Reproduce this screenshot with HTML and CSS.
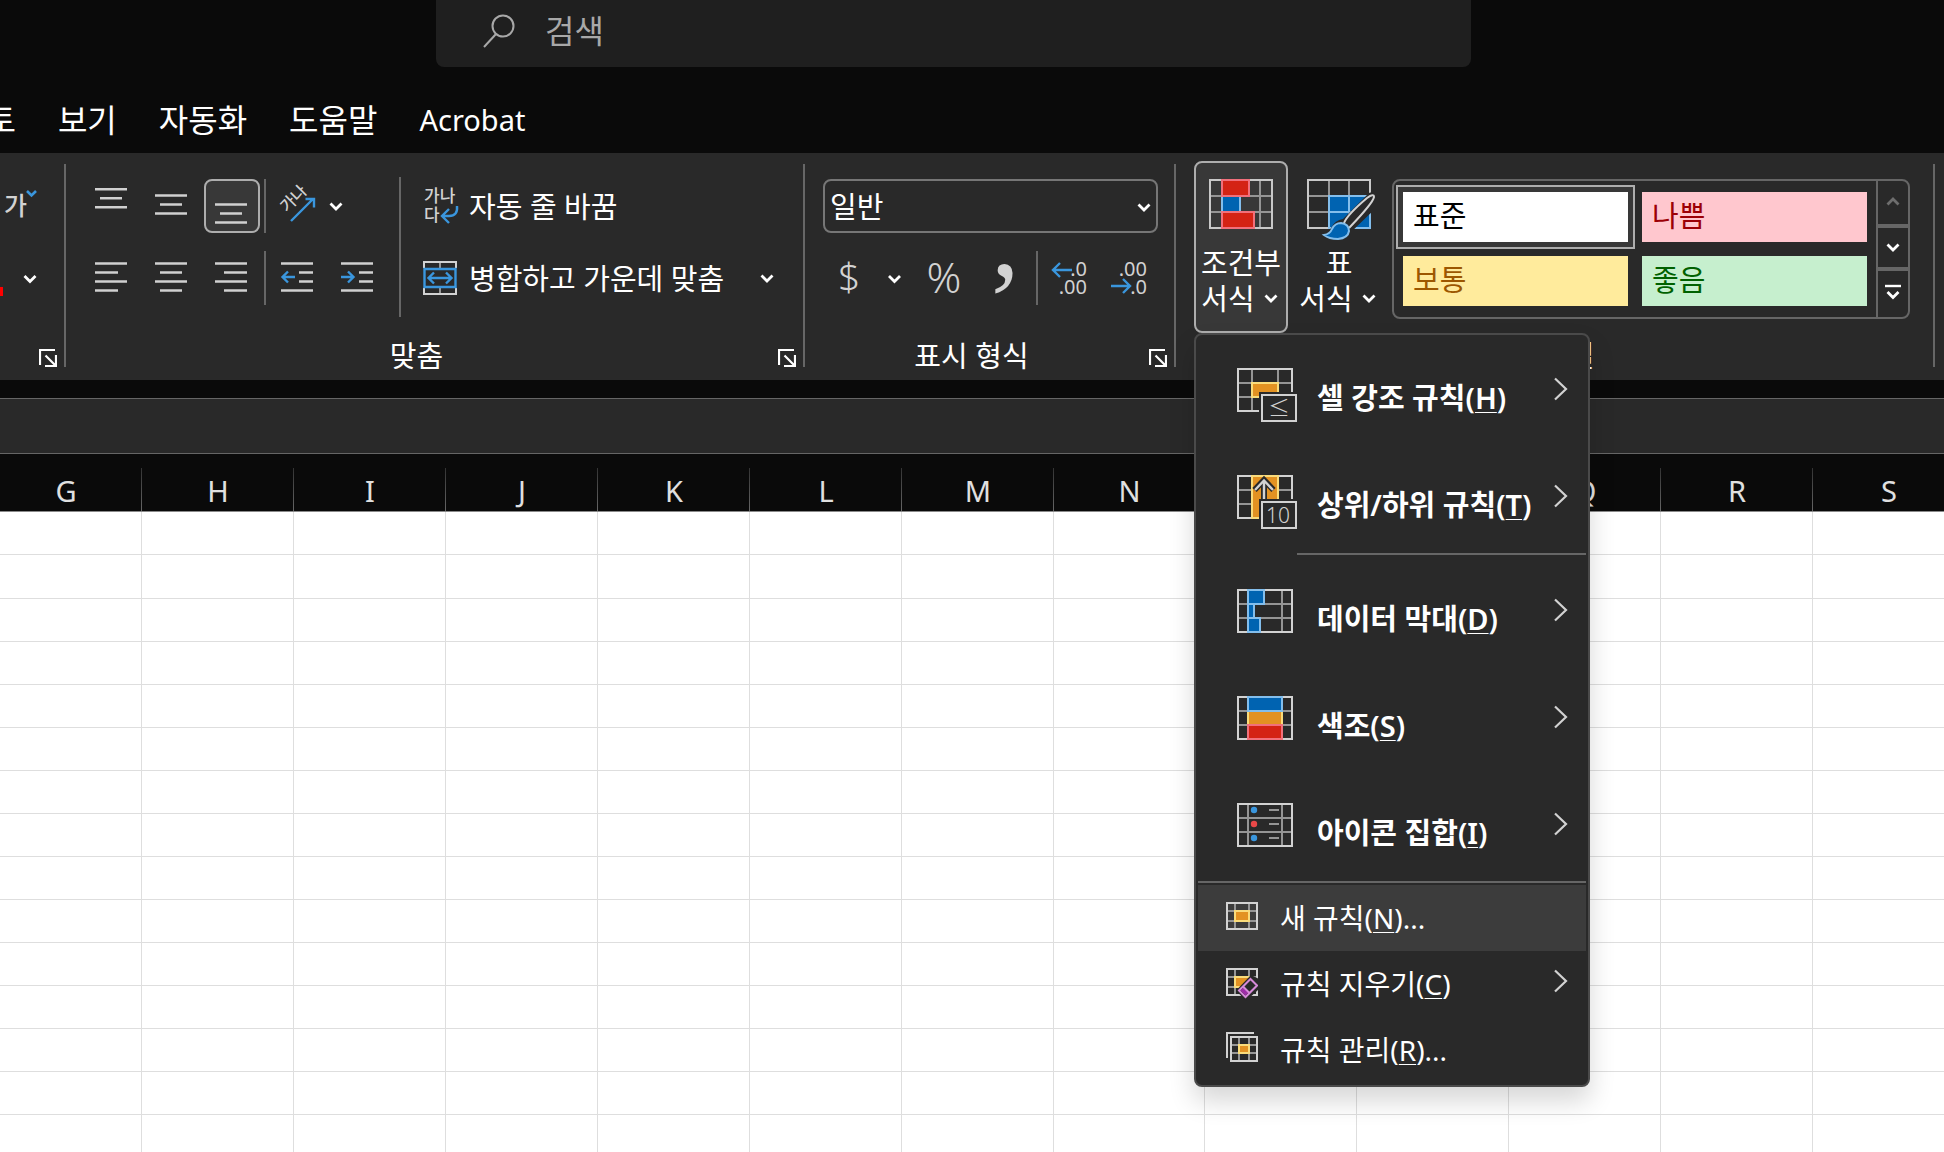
FILE: index.html
```html
<!DOCTYPE html>
<html lang="ko">
<head>
<meta charset="utf-8">
<title>Excel</title>
<link rel="stylesheet" href="styles.css">
</head>
<body>
<svg class="defs" aria-hidden="true">
  <symbol id="chev" viewBox="0 0 14 9"><path d="M1.500 1.500L7 7l5.500-5.500" fill="none" stroke="currentColor" stroke-width="2.800"/></symbol>
  <symbol id="arrow" viewBox="0 0 14 24"><path d="M1 1.500L12 12 1 22.500" fill="none" stroke="#d2d2d2" stroke-width="2.200"/></symbol>
  <symbol id="launch" viewBox="0 0 18 18"><path d="M1 16V1h15M17 6v11H6M6.500 6.500L16 16" fill="none" stroke="#fff" stroke-width="2.200"/></symbol>
</svg>

<header class="top">
  <div class="search">
    <svg width="32" height="34" viewBox="0 0 32 34" fill="none" stroke="#a8a8a8" stroke-width="2"><circle cx="20" cy="12" r="10.500"/><path d="M13 20L1 33"/></svg>
    <input type="text" placeholder="검색" aria-label="검색">
  </div>
  <nav class="tabs">
    <button>검토</button><button>보기</button><button>자동화</button><button>도움말</button><button class="latin">Acrobat</button>
  </nav>
</header>

<main class="sheet">
<section class="ribbon">
  <div class="group font-group">
    <div class="body col">
      <button class="tool cut" aria-label="윗주"><svg width="42" height="54" viewBox="0 0 42 54"><text x="4" y="36" font-size="25" font-weight="500" fill="#d2d2d2">가</text><path d="M27 12l4.500 4.500L36 12" fill="none" stroke="#3a96dd" stroke-width="2.600"/></svg></button>
      <button class="tool cut" aria-label="글꼴 색"><svg width="42" height="54" viewBox="0 0 42 54"><path d="M0 36h3v9H0z" fill="#f00"/><path d="M24.500 25L30 30.500l5.500-5.500" fill="none" stroke="#fff" stroke-width="2.800"/></svg></button>
    </div>
    <footer><span></span><button class="launcher" aria-label="글꼴 설정"><svg width="18" height="18"><use href="#launch"/></svg></button></footer>
  </div>
  <div class="rule"></div>

  <div class="group align-group">
    <div class="body">
      <div class="col">
        <div class="row lines">
          <button class="tool" aria-label="위쪽 맞춤"><svg width="52" height="50" viewBox="2 2 52 50"><path d="M11 10.200h32M16 19.200h22M11 28.200h32"/></svg></button>
          <button class="tool" aria-label="가운데 맞춤"><svg width="52" height="50" viewBox="2 2 52 50"><path d="M11 16.500h32M16 25.500h22M11 34.500h32"/></svg></button>
          <button class="tool on" aria-label="아래쪽 맞춤"><svg width="52" height="50" viewBox="2 2 52 50"><path d="M11 25.500h32M16 34.500h22M11 43.500h32"/></svg></button>
          <div class="bar"></div>
          <button class="tool wide" aria-label="방향"><svg width="76" height="50" viewBox="2 2 76 50"><text x="17" y="34" font-size="16" font-weight="500" fill="#d2d2d2" stroke="none" transform="rotate(-45 17 34)">가나</text><path class="blue" d="M21 42l22-22M35.500 20h8.500v8.500"/><path class="white" d="M60.500 24.500l5.500 5.500 5.500-5.500"/></svg></button>
        </div>
        <div class="row lines">
          <button class="tool" aria-label="왼쪽 맞춤"><svg width="52" height="50" viewBox="2 2 52 50"><path d="M11 12.500h32M11 21.500h23M11 30.500h32M11 39.500h23"/></svg></button>
          <button class="tool" aria-label="가운데 맞춤"><svg width="52" height="50" viewBox="2 2 52 50"><path d="M11 12.500h32M16 21.500h22M11 30.500h32M16 39.500h22"/></svg></button>
          <button class="tool" aria-label="오른쪽 맞춤"><svg width="52" height="50" viewBox="2 2 52 50"><path d="M11 12.500h32M20 21.500h23M11 30.500h32M20 39.500h23"/></svg></button>
          <div class="bar"></div>
          <button class="tool" aria-label="내어쓰기"><svg width="52" height="50" viewBox="2 2 52 50"><path d="M11 12.500h32M29 21.500h14M29 30.500h14M11 39.500h32"/><path class="blue" d="M25 26H13M18 20.500L12.500 26l5.500 5.500"/></svg></button>
          <button class="tool" aria-label="들여쓰기"><svg width="52" height="50" viewBox="2 2 52 50"><path d="M11 12.500h32M29 21.500h14M29 30.500h14M11 39.500h32"/><path class="blue" d="M11 26h12M18 20.500l5.500 5.500-5.500 5.500"/></svg></button>
        </div>
      </div>
      <div class="bar tall"></div>
      <div class="col wrapcol">
        <button class="labeled"><svg width="36" height="38" viewBox="0 0 36 38"><text x="1" y="15" font-size="17" font-weight="500" fill="#d2d2d2">가나</text><text x="1" y="34" font-size="17" font-weight="500" fill="#d2d2d2">다</text><path d="M34 19q1 10-8 10h-7M26 22l-7 7 7 7" fill="none" stroke="#3a96dd" stroke-width="2.400"/></svg><span>자동 줄 바꿈</span></button>
        <button class="labeled"><svg width="36" height="34" viewBox="0 0 36 34" fill="none" stroke-width="2"><path d="M1 7V1h32v6M1 27v6h32v-6" stroke="#d2d2d2"/><path d="M17 2v5M17 27v5" stroke="#959595"/><path d="M1.500 8h31v18h-31zM6 17h22M11 11.500L5.500 17l5.500 5.500M23 11.500l5.500 5.500-5.500 5.500" stroke="#3a96dd" stroke-width="2.400"/></svg><span>병합하고 가운데 맞춤</span><svg width="14" height="9"><use href="#chev"/></svg></button>
      </div>
    </div>
    <footer><span>맞춤</span><button class="launcher" aria-label="맞춤 설정"><svg width="18" height="18"><use href="#launch"/></svg></button></footer>
  </div>
  <div class="rule"></div>

  <div class="group number-group">
    <div class="body col">
      <div class="combo">
        <select aria-label="표시 형식"><option>일반</option></select>
        <svg width="14" height="9"><use href="#chev"/></svg>
      </div>
      <div class="row">
        <button class="tool money" aria-label="회계 표시 형식"><svg width="85" height="50" viewBox="2 2 85 50"><text x="15" y="40" class="light" font-size="39">$</text><path d="M66 25l5.500 5.500L77 25" fill="none" stroke="#fff" stroke-width="2.800"/></svg></button>
        <button class="tool" aria-label="백분율"><svg width="52" height="50" viewBox="2 2 52 50"><text x="28" y="42" class="light" font-size="43" text-anchor="middle">%</text></svg></button>
        <button class="tool" aria-label="쉼표 스타일"><svg width="52" height="50" viewBox="2 2 52 50"><text x="15" y="25" class="comma" font-size="115">,</text></svg></button>
        <div class="bar"></div>
        <button class="tool" aria-label="자릿수 늘림"><svg width="52" height="50" viewBox="2 2 52 50"><g class="digits"><text x="45" y="25">.0</text><text x="45" y="43">.00</text></g><path d="M30 19H11M18 12l-7 7 7 7" fill="none" stroke="#3a96dd" stroke-width="2.400"/></svg></button>
        <button class="tool" aria-label="자릿수 줄임"><svg width="52" height="50" viewBox="2 2 52 50"><g class="digits"><text x="45" y="25">.00</text><text x="45" y="43">.0</text></g><path d="M9 35h19M21 28l7 7-7 7" fill="none" stroke="#3a96dd" stroke-width="2.400"/></svg></button>
      </div>
    </div>
    <footer><span>표시 형식</span><button class="launcher" aria-label="표시 형식 설정"><svg width="18" height="18"><use href="#launch"/></svg></button></footer>
  </div>
  <div class="rule"></div>

  <div class="group style-group">
    <div class="body">
      <div class="anchor">
        <button class="big on" aria-haspopup="menu" aria-expanded="true">
          <svg width="68" height="62" viewBox="-2 0 68 62" fill="none" stroke-width="2"><path d="M51 1v48M1 17h62M1 33h62" stroke="#959595"/><path d="M1 1h62v48H1z" stroke="#c8c8c8"/><path d="M13 17h18v16H13z" fill="#0063b1" stroke="#83beec"/><path d="M13 1h27v16H13zM13 33h32v16H13z" fill="#d42314" stroke="#f1707b"/></svg>
          <span>조건부</span><span class="drop">서식<svg width="14" height="9"><use href="#chev"/></svg></span>
        </button>
        <div class="menu" role="menu">
          <button role="menuitem" class="large"><svg width="60" height="54" viewBox="0 0 60 54" fill="none" stroke-width="2"><path d="M15 1v42M41 1v42M1 15h54M1 29h54" stroke="#959595"/><path d="M1 1h54v42H1z" stroke="#d2d2d2"/><path d="M15 15h26v14H15z" fill="#e39222" stroke="#fadc7b"/><path d="M22 24h38v30H22z" fill="#292929"/><path d="M25 27h34v26H25z" stroke="#d2d2d2"/><text x="42" y="48" class="light" font-size="22" text-anchor="middle">≤</text></svg><span>셀 강조 규칙(<u>H</u>)</span><svg width="14" height="24"><use href="#arrow"/></svg></button>
          <button role="menuitem" class="large"><svg width="60" height="54" viewBox="0 0 60 54" fill="none" stroke-width="2"><path d="M1 15h54M1 29h54" stroke="#959595"/><path d="M1 1h54v42H1z" stroke="#d2d2d2"/><path d="M15 1h26v42H15z" fill="#e39222" stroke="#fadc7b"/><path d="M27 28V6M17.500 15L27 5l9.500 10" stroke="#292929" stroke-width="6"/><path d="M27 28V6M18 15l9-9.500 9 9.500" stroke="#d2d2d2" stroke-width="2.400"/><path d="M22 24h38v30H22z" fill="#292929"/><path d="M25 27h34v26H25z" stroke="#d2d2d2"/><text x="41" y="48" class="light" font-size="21" text-anchor="middle">10</text></svg><span>상위/하위 규칙(<u>T</u>)</span><svg width="14" height="24"><use href="#arrow"/></svg></button>
          <div class="sep inset" role="separator"></div>
          <button role="menuitem" class="large"><svg width="60" height="54" viewBox="0 0 60 54" fill="none" stroke-width="2"><path d="M45 1v42M1 15h54M1 29h54" stroke="#959595"/><path d="M1 1h54v42H1z" stroke="#d2d2d2"/><path d="M11 1h16v14H11zM11 15h6v14h-6zM11 29h12v14H11z" fill="#0063b1" stroke="#83beec"/></svg><span>데이터 막대(<u>D</u>)</span><svg width="14" height="24"><use href="#arrow"/></svg></button>
          <button role="menuitem" class="large"><svg width="60" height="54" viewBox="0 0 60 54" fill="none" stroke-width="2"><path d="M1 15h54M1 29h54" stroke="#959595"/><path d="M1 1h54v42H1z" stroke="#d2d2d2"/><path d="M11 15h34v14H11z" fill="#e39222" stroke="#fadc7b"/><path d="M11 1h34v14H11z" fill="#0063b1" stroke="#83beec"/><path d="M11 29h34v14H11z" fill="#d42314" stroke="#f1707b"/></svg><span>색조(<u>S</u>)</span><svg width="14" height="24"><use href="#arrow"/></svg></button>
          <button role="menuitem" class="large"><svg width="60" height="54" viewBox="0 0 60 54" fill="none" stroke-width="2"><path d="M11 1v42M45 1v42M1 15h54M1 29h54M32 7h10M32 21h10M32 35h10" stroke="#959595"/><path d="M1 1h54v42H1z" stroke="#d2d2d2"/><g stroke="none"><circle cx="17" cy="7" r="3.200" fill="#3a96dd"/><circle cx="17" cy="21" r="3.200" fill="#e94848"/><circle cx="17" cy="35" r="3.200" fill="#3a96dd"/></g></svg><span>아이콘 집합(<u>I</u>)</span><svg width="14" height="24"><use href="#arrow"/></svg></button>
          <div class="sep" role="separator"></div>
          <button role="menuitem" class="small hover"><svg width="32" height="36" viewBox="0 -2 32 36" fill="none" stroke-width="2"><path d="M9 1v26M23 1v26M1 9h30M1 19h30" stroke="#959595"/><path d="M1 1h30v26H1z" stroke="#d2d2d2"/><path d="M9 9h14v10H9z" fill="#e39222" stroke="#fadc7b"/></svg><span>새 규칙(<u>N</u>)...</span></button>
          <button role="menuitem" class="small"><svg width="32" height="36" viewBox="0 -2 32 36" fill="none" stroke-width="2"><path d="M9 1v26M23 1v26M1 9h30M1 19h30" stroke="#959595"/><path d="M1 1h30v26H1z" stroke="#d2d2d2"/><path d="M9 9h14v10H9z" fill="#e39222" stroke="#fadc7b"/><path d="M10 22.500L25 7l8 4v10L20 33z" fill="#292929"/><path d="M13 22.500L24.500 11l6.500 6.500L19.500 29z" stroke="#d58ad8"/><path d="M14.500 22.500l3-3 5 5-3 3z" fill="#9e2ca8"/><path d="M17 18.500l6.500 6.500" stroke="#d58ad8"/></svg><span>규칙 지우기(<u>C</u>)</span><svg width="14" height="24"><use href="#arrow"/></svg></button>
          <button role="menuitem" class="small"><svg width="32" height="36" viewBox="0 0 32 36" fill="none" stroke-width="2"><path d="M13 5v24M23 5v24M5 13h26M5 21h26" stroke="#959595"/><path d="M1 26V1h27M5 5h26v24H5z" stroke="#d2d2d2"/><path d="M13 13h10v8H13z" fill="#e39222" stroke="#fadc7b"/></svg><span>규칙 관리(<u>R</u>)...</span></button>
        </div>
      </div>
      <button class="big">
        <svg width="68" height="62" viewBox="-2 0 68 62" fill="none" stroke-width="2" overflow="visible"><path d="M22 1v48M42 1v48M1 17h62M1 33h62" stroke="#959595"/><path d="M1 1h62v48H1z" stroke="#c8c8c8"/><path d="M22 17h41v32H22zM42 17v32M22 33h41" fill="#0063b1" stroke="#83beec"/><path d="M62 14q4-2 7 1v14L42 55q-12 10-28 2 7-2 10-8 4-8 12-9z" fill="#292929"/><path d="M37 44q3-8 23-25 7-5 7-1-1 6-25 31" stroke="#d2d2d2"/><path d="M17 56q6-1 8-6 3-6 9-6 8 1 8 8-1 7-11 8-9 0-14-4z" fill="#0063b1" stroke="#83beec"/></svg>
        <span>표</span><span class="drop">서식<svg width="14" height="9"><use href="#chev"/></svg></span>
      </button>
      <div class="gallery">
        <div class="swatches">
          <button class="swatch picked"><span class="s-normal">표준</span></button>
          <button class="swatch"><span class="s-bad">나쁨</span></button>
          <button class="swatch"><span class="s-neutral">보통</span></button>
          <button class="swatch"><span class="s-good">좋음</span></button>
        </div>
        <div class="scroller">
          <button class="dim" aria-label="위로"><svg width="14" height="9" viewBox="0 0 14 9"><path d="M1.500 7.500L7 2l5.500 5.500" fill="none" stroke="currentColor" stroke-width="2.800"/></svg></button>
          <button aria-label="아래로"><svg width="14" height="9"><use href="#chev"/></svg></button>
          <button class="more" aria-label="자세히"><svg width="16" height="16" viewBox="0 0 16 16" fill="none" stroke="#fff"><path d="M0 2h16" stroke-width="2.400"/><path d="M2.500 8L8 13.500 13.500 8" stroke-width="2.800"/></svg></button>
        </div>
      </div>
    </div>
    <footer><span>스타일</span></footer>
  </div>
  <div class="rule"></div>
  <div class="tail"></div>
</section>

<div class="formula"></div>

<div class="grid">
  <table>
    <thead><tr><th scope="col">G</th><th scope="col">H</th><th scope="col">I</th><th scope="col">J</th><th scope="col">K</th><th scope="col">L</th><th scope="col">M</th><th scope="col" class="narrow">N</th><th scope="col">O</th><th scope="col">P</th><th scope="col">Q</th><th scope="col">R</th><th scope="col">S</th></tr></thead>
    <tbody>
      <tr><td></td><td></td><td></td><td></td><td></td><td></td><td></td><td></td><td></td><td></td><td></td><td></td><td></td></tr>
      <tr><td></td><td></td><td></td><td></td><td></td><td></td><td></td><td></td><td></td><td></td><td></td><td></td><td></td></tr>
      <tr><td></td><td></td><td></td><td></td><td></td><td></td><td></td><td></td><td></td><td></td><td></td><td></td><td></td></tr>
      <tr><td></td><td></td><td></td><td></td><td></td><td></td><td></td><td></td><td></td><td></td><td></td><td></td><td></td></tr>
      <tr><td></td><td></td><td></td><td></td><td></td><td></td><td></td><td></td><td></td><td></td><td></td><td></td><td></td></tr>
      <tr><td></td><td></td><td></td><td></td><td></td><td></td><td></td><td></td><td></td><td></td><td></td><td></td><td></td></tr>
      <tr><td></td><td></td><td></td><td></td><td></td><td></td><td></td><td></td><td></td><td></td><td></td><td></td><td></td></tr>
      <tr><td></td><td></td><td></td><td></td><td></td><td></td><td></td><td></td><td></td><td></td><td></td><td></td><td></td></tr>
      <tr><td></td><td></td><td></td><td></td><td></td><td></td><td></td><td></td><td></td><td></td><td></td><td></td><td></td></tr>
      <tr><td></td><td></td><td></td><td></td><td></td><td></td><td></td><td></td><td></td><td></td><td></td><td></td><td></td></tr>
      <tr><td></td><td></td><td></td><td></td><td></td><td></td><td></td><td></td><td></td><td></td><td></td><td></td><td></td></tr>
      <tr><td></td><td></td><td></td><td></td><td></td><td></td><td></td><td></td><td></td><td></td><td></td><td></td><td></td></tr>
      <tr><td></td><td></td><td></td><td></td><td></td><td></td><td></td><td></td><td></td><td></td><td></td><td></td><td></td></tr>
      <tr><td></td><td></td><td></td><td></td><td></td><td></td><td></td><td></td><td></td><td></td><td></td><td></td><td></td></tr>
      <tr><td></td><td></td><td></td><td></td><td></td><td></td><td></td><td></td><td></td><td></td><td></td><td></td><td></td></tr>
    </tbody>
  </table>
</div>
</main>
</body>
</html>
```

FILE: styles.css
```css
* { box-sizing: border-box; }

body {
  margin: 0;
  height: 100vh;
  overflow: hidden;
  background: #fff;
  color: #fff;
  font: 29px/36px "Noto Sans", "Noto Sans CJK KR", sans-serif;
}

button, input, select {
  font: inherit;
  color: inherit;
  background: none;
  border: 0;
  margin: 0;
  padding: 0;
}

svg { display: block; flex: none; }
.defs { width: 0; height: 0; position: absolute; }

/* title bar and tabs */
.top { background: #0a0a0a; height: 153px; overflow: hidden; }

.search {
  height: 67px;
  margin: 0 473px 0 436px;
  padding: 0 47px 6px;
  display: flex;
  align-items: center;
  gap: 30px;
  background: #1f1f1f;
  border-radius: 0 0 8px 8px;
}
.search input { flex: 1; min-width: 0; font-size: 32px; outline: 0; }
.search input::placeholder { color: #a8a8a8; opacity: 1; }

.tabs {
  display: flex;
  gap: 42px;
  margin-left: -43px;
  padding-top: 30px;
  font-size: 32px;
  line-height: 46px;
}
.tabs button { white-space: nowrap; }
.tabs .latin { font-size: 29px; }

/* ribbon */
.ribbon { display: flex; height: 227px; background: #292929; }
.rule { width: 2px; background: #666; margin: 11px 0 13px; flex: none; }
.tail { width: 9px; flex: none; }

.group { display: flex; flex-direction: column; flex: none; min-width: 0; }
.body { display: flex; height: 184px; padding-top: 26px; }
.col { display: flex; flex-direction: column; gap: 18px; }
.row { display: flex; gap: 4px; }

.group footer { display: flex; height: 38px; align-items: center; white-space: nowrap; }
.group footer span { flex: 1; text-align: center; }
.launcher { width: 36px; padding: 4px 0 0 11px; }

.tool { width: 56px; height: 54px; border: 2px solid transparent; border-radius: 8px; flex: none; }
.tool.on, .big.on { background: #383838; border-color: #adadad; }
.tool.wide { width: 80px; }
.tool.money { width: 89px; }
.tool.cut { width: 42px; border: 0; }
.lines svg { fill: none; stroke: #d0d0d0; stroke-width: 2.4; }
.lines .blue { stroke: #3a96dd; }
.lines .white { stroke: #fff; stroke-width: 2.8; }

.bar { width: 2px; background: #666; flex: none; }
.bar.tall { height: 140px; margin: -2px 10px 0 13px; }

.light { font-weight: 300; fill: #d2d2d2; stroke: none; }
.comma { font-family: "Liberation Serif", serif; fill: #d2d2d2; }
.digits { font: 400 20px "Liberation Sans Narrow", "Noto Sans", sans-serif; fill: #d2d2d2; text-anchor: end; }

.font-group { width: 64px; }
.font-group .launcher { width: 25px; padding-left: 0; }

.align-group { width: 737px; }
.align-group .body { padding-left: 18px; }
.wrapcol { flex: 1; }
.labeled {
  display: flex;
  align-items: center;
  gap: 10px;
  height: 54px;
  padding: 0 29px 0 12px;
  text-align: left;
  white-space: nowrap;
}
.labeled span { flex: 1; padding-top: 2px; }

.number-group { width: 369px; }
.number-group .body { padding: 26px 16px 0 18px; }
.combo { display: grid; align-items: center; }
.combo select {
  grid-area: 1 / 1;
  height: 54px;
  padding: 2px 5px 0;
  appearance: none;
  border: 2px solid #767676;
  border-radius: 8px;
}
.combo option { background: #292929; }
.combo svg { grid-area: 1 / 1; justify-self: end; margin: 2px 7px 0 0; pointer-events: none; }

.style-group { flex: 1; }
.style-group .body { padding: 8px 23px 0 18px; }

.big {
  width: 94px;
  height: 172px;
  padding: 16px 0 0;
  border: 2px solid transparent;
  border-radius: 8px;
  display: flex;
  flex-direction: column;
  align-items: center;
  white-space: nowrap;
  flex: none;
}
.big > svg { margin-bottom: 4px; }
.drop { display: flex; align-items: center; gap: 9px; padding-right: 3px; }
.drop svg { margin-top: -2px; }

.anchor { position: relative; margin-right: 4px; }

.gallery {
  flex: 1;
  display: flex;
  height: 140px;
  margin: 18px 0 0 6px;
  border: 2px solid #666;
  border-radius: 8px;
}
.swatches { flex: 1; display: grid; grid-template-columns: 1fr 1fr; grid-auto-rows: 64px; padding: 4px 2px; }
.swatch { border: 2px solid transparent; padding: 5px; text-align: left; }
.swatch.picked { border-color: #adadad; background: #383838; }
.swatch span { display: block; height: 50px; padding: 6px 10px; }
.s-normal { background: #fff; color: #000; }
.s-bad { background: #ffc7ce; color: #9c0006; }
.s-neutral { background: #ffeb9c; color: #9c5700; }
.s-good { background: #c6efce; color: #006100; }

.scroller { width: 32px; border-left: 2px solid #666; display: flex; flex-direction: column; }
.scroller button { height: 43px; display: flex; align-items: center; justify-content: center; }
.scroller button + button { border-top: 4px solid #666; }
.scroller .dim { color: #6e6e6e; padding-bottom: 2px; }
.scroller .more { flex: 1; padding-bottom: 4px; }

/* drop-down menu */
.menu {
  position: absolute;
  z-index: 1;
  left: 0;
  top: 172px;
  width: 396px;
  padding: 0 2px 2px;
  background: #292929;
  border: 2px solid #4a4a4a;
  border-radius: 8px;
  box-shadow: 0 14px 26px rgba(0, 0, 0, .16);
}
.menu button { display: flex; width: 100%; text-align: left; white-space: nowrap; }
.menu button span { flex: 1; }
.menu u { text-decoration-thickness: 1px; text-underline-offset: 3px; }
.large { height: 107px; padding: 33px 18px 0 39px; gap: 20px; font-weight: 600; }
.large span { padding-top: 12px; }
.large svg:last-child { margin-top: 9px; }
.small { height: 66px; padding: 15px 18px 0 28px; gap: 22px; font-size: 28px; }
.small svg:last-child { margin-top: 3px; }
.small.hover { background: #3c3c3c; }
.sep { height: 8px; border: solid #292929; border-width: 4px 0 2px; background: #666; }
.sep.inset { height: 7px; border-bottom-width: 1px; margin-left: 99px; }

/* formula bar */
.formula {
  height: 56px;
  margin-top: 18px;
  background: #292929;
  border: solid #666;
  border-width: 1px 0;
}
.sheet { background: #0a0a0a; }

/* worksheet */
.grid { overflow: hidden; }
table { width: 1975px; min-width: calc(100% + 10px); margin-left: -10px; table-layout: fixed; border-spacing: 0; }
th {
  width: 152px;
  height: 58px;
  padding: 16px 0 0;
  font-weight: 400;
  color: #e0e0e0;
  background: linear-gradient(#333, #666) right bottom / 1px 43px no-repeat;
  border-bottom: 1px solid #8a8a8a;
}
.narrow { width: 151px; }
td { height: 43px; padding: 0; background: #fff; border: solid #dedede; border-width: 0 1px 1px 0; }
tbody tr:nth-child(2) td { height: 44px; }
```
